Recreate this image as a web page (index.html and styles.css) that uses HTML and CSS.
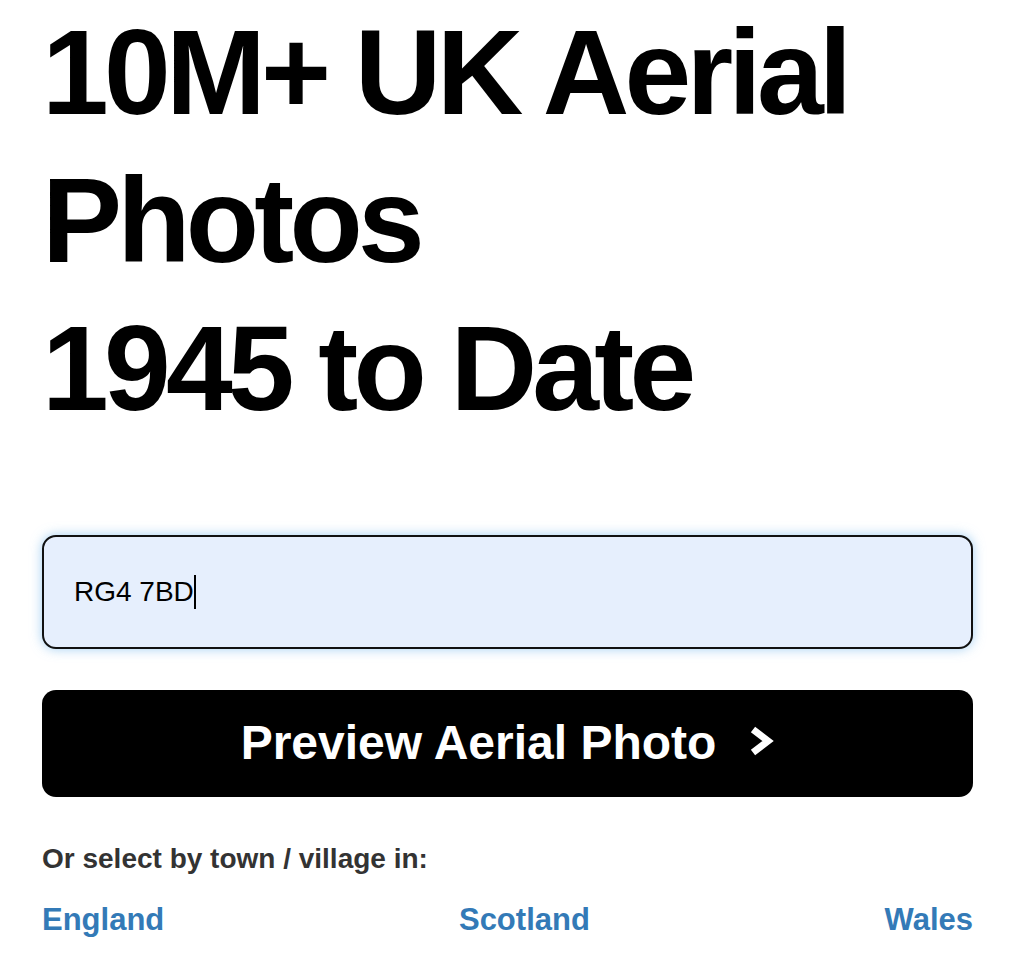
FILE: index.html
```html
<!DOCTYPE html>
<html lang="en">
<head>
<meta charset="utf-8">
<title>10M+ UK Aerial Photos 1945 to Date</title>
<link rel="stylesheet" href="styles.css">
</head>
<body>
<main class="page">
  <h1 class="title">10M+ UK Aerial Photos<br>1945 to Date</h1>
  <form class="search">
    <div class="field">
      <span class="field-value">RG4 7BD</span><span class="caret"></span>
    </div>
    <button type="button" class="preview-btn">
      <span>Preview Aerial Photo</span>
      <svg class="chev" viewBox="0 0 26 30" width="26" height="30" aria-hidden="true">
        <polyline points="5,3.5 20,15 5,26.5" fill="none" stroke="#fff" stroke-width="7" stroke-linejoin="miter"/>
      </svg>
    </button>
  </form>
  <p class="select-label">Or select by town / village in:</p>
  <nav class="regions">
    <a href="#" class="region">England</a>
    <a href="#" class="region">Scotland</a>
    <a href="#" class="region">Wales</a>
  </nav>
</main>
</body>
</html>
```
FILE: styles.css
```css
html, body {
  margin: 0;
  padding: 0;
  background: #fff;
}

body {
  font-family: "Liberation Sans", Arial, Helvetica, sans-serif;
  color: #000;
}

.page {
  width: 931px;
  margin-left: 42px;
}

.title {
  margin: -2px 0 0 0;
  font-size: 120px;
  line-height: 148px;
  font-weight: 700;
  letter-spacing: -0.04em;
  color: #000;
}

.search {
  margin: 93px 0 0 0;
  display: flex;
  flex-direction: column;
  gap: 41px;
}

.field {
  box-sizing: border-box;
  height: 114px;
  border: 2px solid #111;
  border-radius: 14px;
  background: #e6effd;
  box-shadow: 0 0 12px rgba(102, 175, 233, 0.6);
  padding-left: 30px;
  display: flex;
  align-items: center;
  font-size: 28px;
  color: #000;
}

.caret {
  display: inline-block;
  width: 2px;
  height: 34px;
  background: #000;
}

.preview-btn {
  box-sizing: border-box;
  height: 107px;
  border: 0;
  border-radius: 14px;
  background: #000;
  color: #fff;
  font-family: "Liberation Sans", Arial, Helvetica, sans-serif;
  font-size: 48px;
  font-weight: 700;
  display: flex;
  align-items: center;
  justify-content: center;
  gap: 32px;
  padding: 0 0 2px 0;
  cursor: pointer;
}

.chev {
  display: block;
  margin-top: -4px;
}

.select-label {
  margin: 45px 0 0 0;
  font-size: 28px;
  line-height: 34px;
  font-weight: 700;
  color: #333;
}

.regions {
  margin-top: 25px;
  display: flex;
  justify-content: space-between;
  line-height: 38px;
}

.region {
  font-size: 31px;
  font-weight: 700;
  color: #337ab7;
  text-decoration: none;
}
```
